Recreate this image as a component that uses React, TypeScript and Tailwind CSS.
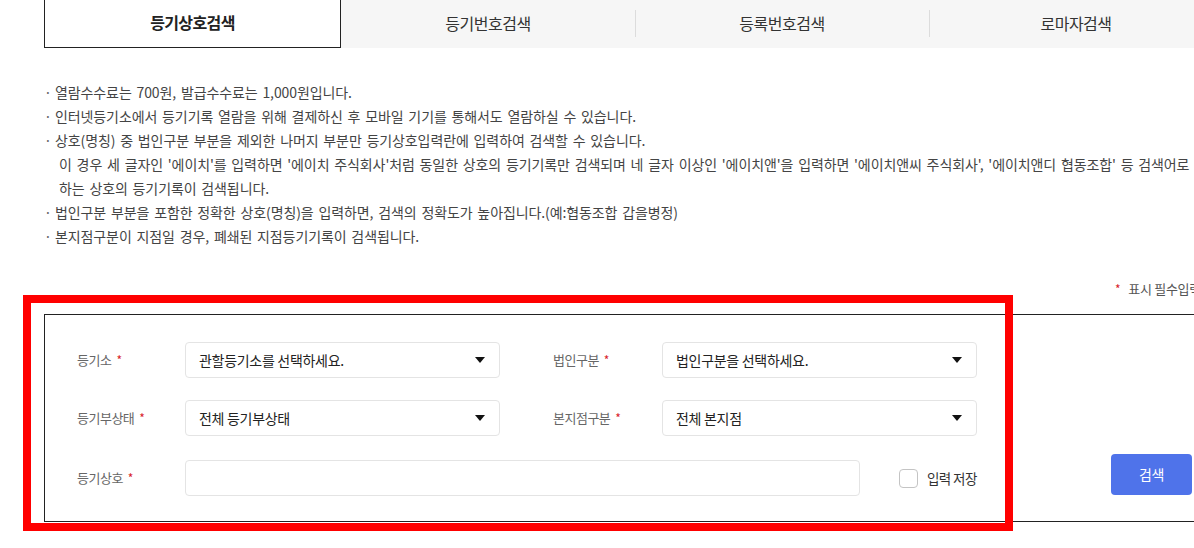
import React from 'react'

// 검색 탭 목록
const tabs = ['등기상호검색', '등기번호검색', '등록번호검색', '로마자검색']

// 안내 문구
const notes: string[][] = [
  ['열람수수료는 700원, 발급수수료는 1,000원입니다.'],
  ['인터넷등기소에서 등기기록 열람을 위해 결제하신 후 모바일 기기를 통해서도 열람하실 수 있습니다.'],
  [
    '상호(명칭) 중 법인구분 부분을 제외한 나머지 부분만 등기상호입력란에 입력하여 검색할 수 있습니다.',
    "이 경우 세 글자인 '에이치'를 입력하면 '에이치 주식회사'처럼 동일한 상호의 등기기록만 검색되며 네 글자 이상인 '에이치앤'을 입력하면 '에이치앤씨 주식회사', '에이치앤디 협동조합' 등 검색어로",
    '하는 상호의 등기기록이 검색됩니다.',
  ],
  ['법인구분 부분을 포함한 정확한 상호(명칭)을 입력하면, 검색의 정확도가 높아집니다.(예:협동조합 갑을병정)'],
  ['본지점구분이 지점일 경우, 폐쇄된 지점등기기록이 검색됩니다.'],
]

function Label({ text, width }: { text: string; width: string }) {
  return (
    <div className={`${width} shrink-0 flex items-center gap-[5px] text-[13px] tracking-[-0.5px] text-[#666]`}>
      <span>{text}</span>
      <span className="text-[#d8232a] text-[12px]">*</span>
    </div>
  )
}

function SelectBox({ value }: { value: string }) {
  return (
    <div className="w-[315px] h-[36px] shrink-0 rounded-[4px] border border-[#e4e4e4] bg-white flex items-center justify-between pl-[13px] pr-[14px]">
      <span className="text-[14px] tracking-[-0.3px] text-[#222]">{value}</span>
      <svg width="10" height="6" viewBox="0 0 10 6">
        <path d="M0 0H10L5 6Z" fill="#111" />
      </svg>
    </div>
  )
}

export default function App() {
  return (
    <div className="w-[1194px] h-[548px] overflow-hidden bg-white font-['Noto_Sans_CJK_KR','Noto_Sans',sans-serif]">
      <div className="ml-[44px] w-[1180px]">
        {/* 탭 */}
        <div className="flex h-[48px] bg-[#f6f6f6]">
          {tabs.map((tab, i) => (
            <div
              key={tab}
              className={
                i === 0
                  ? 'w-[297px] shrink-0 flex items-center justify-center pb-[3px] bg-white border-x border-b border-[#222] text-[16px] font-bold tracking-[-0.6px] text-[#222]'
                  : 'w-[294px] shrink-0 flex items-center justify-center pb-[3px] text-[16px] tracking-[-0.5px] text-[#333] relative'
              }
            >
              {i > 1 && <span className="absolute left-0 top-[10px] h-[27px] w-px bg-[#dcdcdc]" />}
              {tab}
            </div>
          ))}
        </div>

        {/* 안내 문구 */}
        <ul className="mt-[32px] text-[14px] leading-[24px] tracking-[-0.1px] [word-spacing:1.8px] text-[#444]">
          {notes.map((lines, i) => (
            <li key={i} className="flex whitespace-nowrap">
              <span className="w-[11px] shrink-0 text-[#666]">·</span>
              <div className="flex flex-col">
                {lines.map((line, j) => (
                  <span key={j} className={j > 0 ? 'pl-[4px]' : ''}>
                    {line}
                  </span>
                ))}
              </div>
            </li>
          ))}
        </ul>

        {/* 필수입력 */}
        <div className="mt-[31px] h-[20px] flex items-center pl-[1071px] whitespace-nowrap text-[13px] tracking-[-0.3px] text-[#555]">
          <span className="text-[#d8232a] text-[12px] mr-[8px]">*</span>
          표시 필수입력
        </div>

        {/* 검색 폼 */}
        <div className="relative mt-[15px] border-t border-l border-b border-[#222] pl-[32px] pt-[27px] pb-[25px] flex items-end">
          <div className="flex flex-col">
            <div className="flex items-center h-[36px]">
              <Label text="등기소" width="w-[108px]" />
              <SelectBox value="관할등기소를 선택하세요." />
              <div className="w-[53px] shrink-0" />
              <Label text="법인구분" width="w-[109px]" />
              <SelectBox value="법인구분을 선택하세요." />
            </div>
            <div className="flex items-center h-[36px] mt-[22px]">
              <Label text="등기부상태" width="w-[108px]" />
              <SelectBox value="전체 등기부상태" />
              <div className="w-[53px] shrink-0" />
              <Label text="본지점구분" width="w-[109px]" />
              <SelectBox value="전체 본지점" />
            </div>
            <div className="flex items-center h-[36px] mt-[24px]">
              <Label text="등기상호" width="w-[108px]" />
              <input
                type="text"
                className="w-[675px] h-[36px] shrink-0 rounded-[4px] border border-[#e4e4e4] bg-white px-[13px] text-[14px] outline-none"
              />
              <label className="ml-[39px] flex items-center gap-[9px] whitespace-nowrap text-[13.5px] tracking-[-0.6px] text-[#333]">
                <span className="w-[19px] h-[19px] rounded-[4px] border border-[#c4c4c4] bg-white" />
                입력 저장
              </label>
            </div>
          </div>
          <button className="ml-[134px] mb-[1px] w-[81px] h-[41px] shrink-0 rounded-[4px] bg-[#4f73ea] text-white text-[14px] tracking-[-0.5px]">
            검색
          </button>

          {/* 표시 박스 */}
          <div className="absolute left-[-22px] top-[-20px] w-[990px] h-[236px] border-[8px] border-[#ff0000] pointer-events-none" />
        </div>
      </div>
    </div>
  )
}
